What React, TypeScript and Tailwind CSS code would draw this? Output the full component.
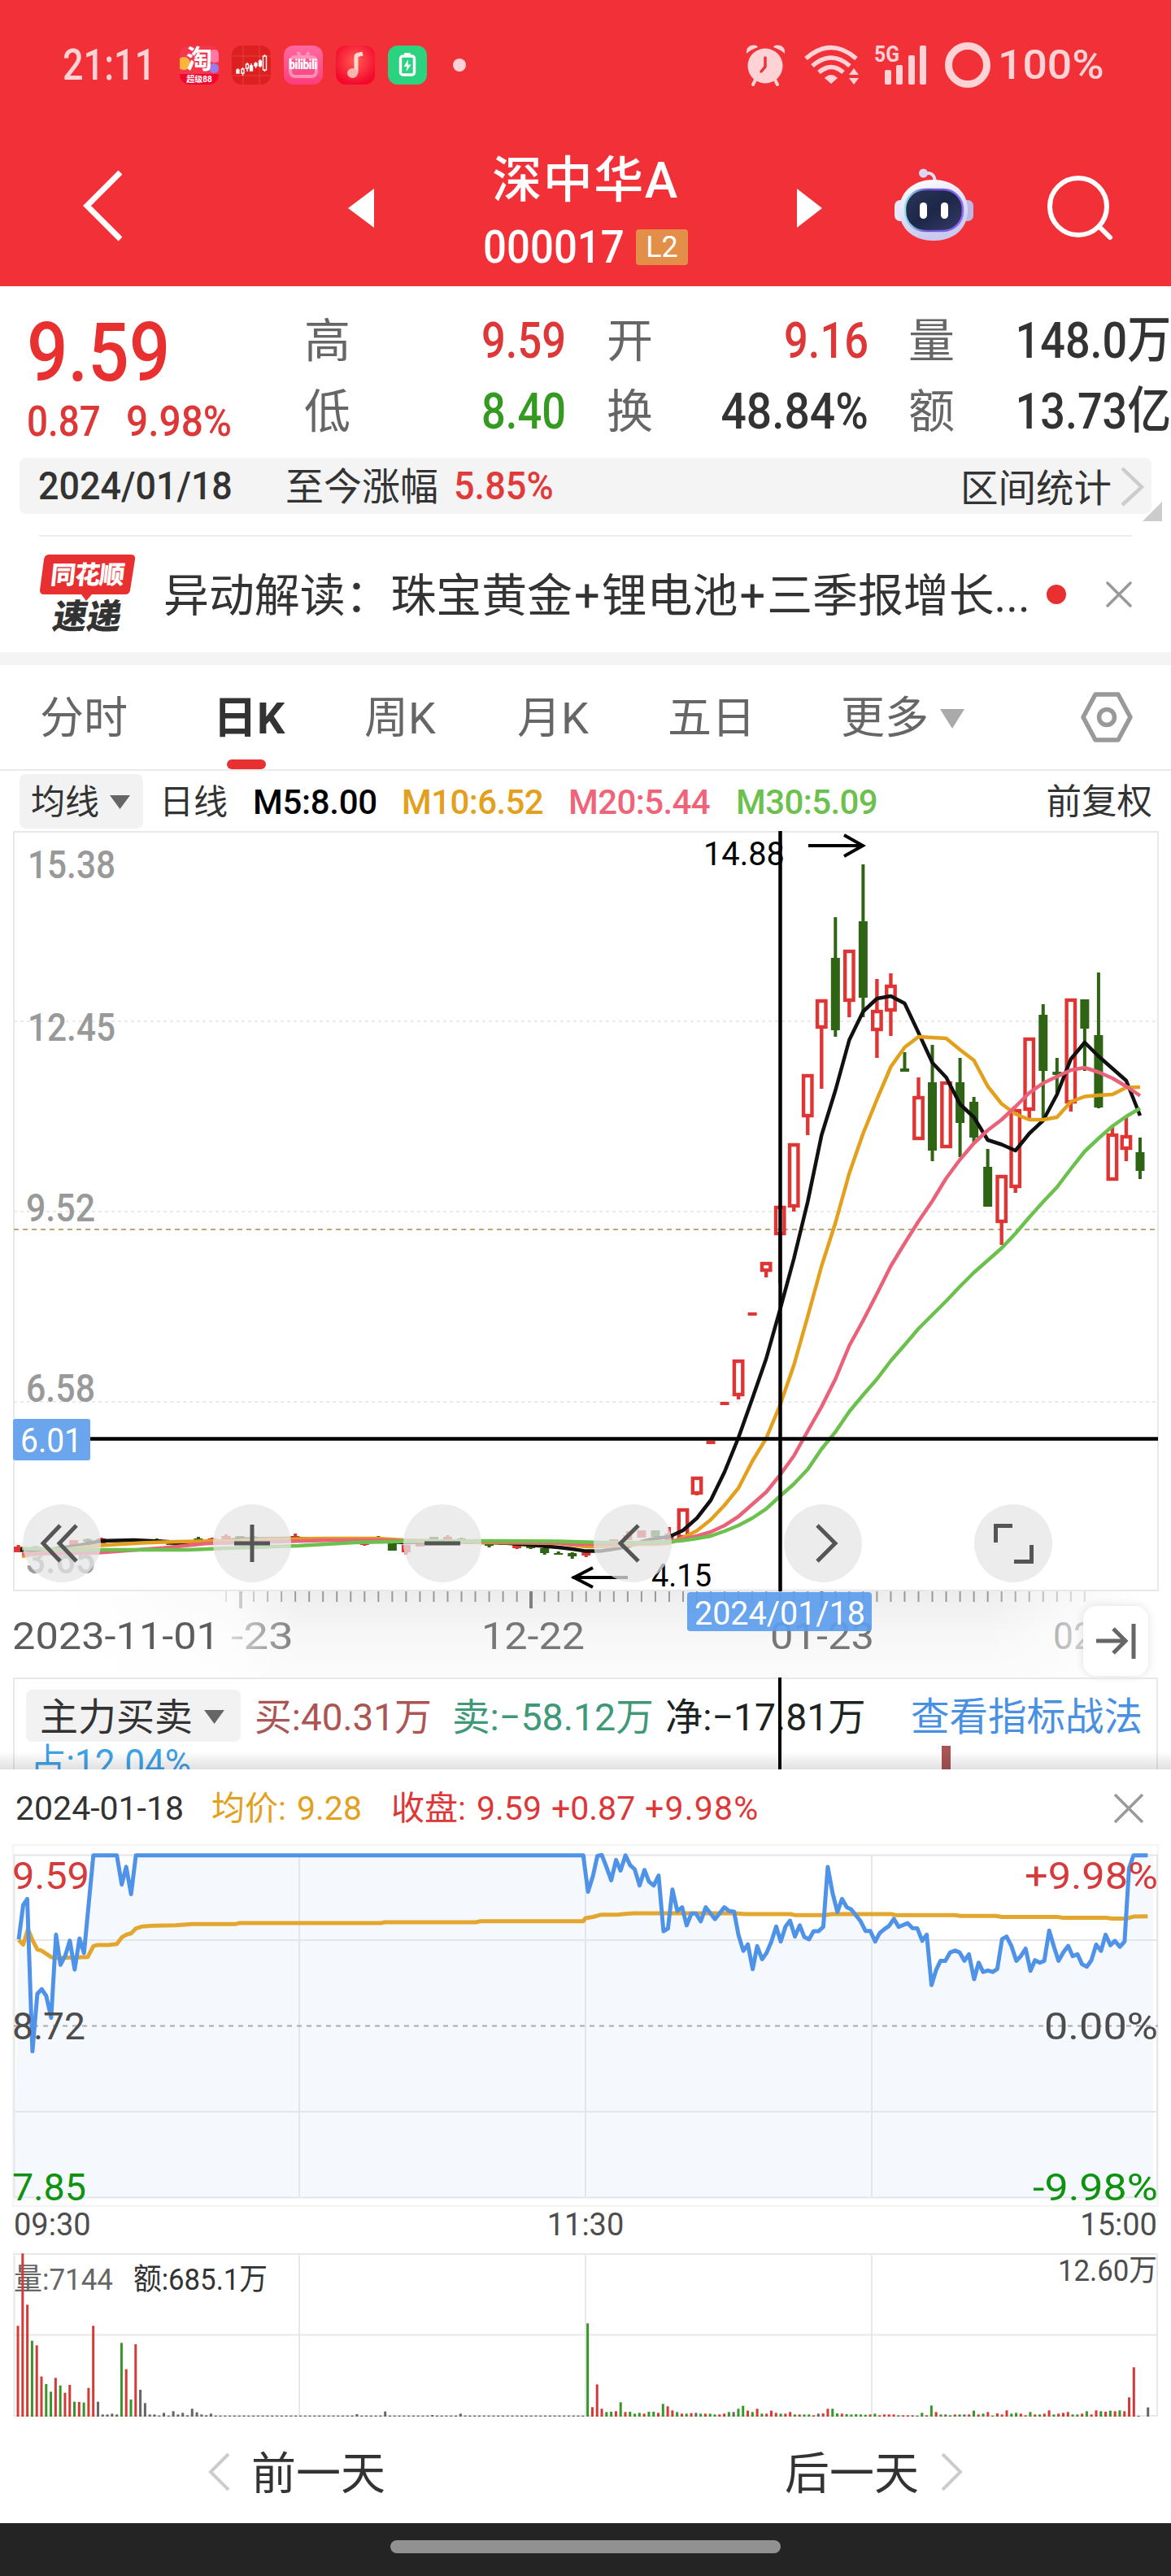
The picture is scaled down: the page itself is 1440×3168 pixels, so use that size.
import type { ReactNode } from 'react'

type Pt = [number, number]
// [slot, high, bodyTop, bodyBottom, low, colour]
type Candle = [number, number, number, number, number, 'r' | 'g']

const RED = '#e03535'
const GREEN = '#2f6415'
const FONT = "Roboto, 'Noto Sans CJK SC', sans-serif"

const SLOT = 17.03
const slotX = (i: number) => 959.2 + i * SLOT

const CANDLES: Candle[] = [
  [-55, 1900, 1902, 1909, 1909, 'r'], [-54, 1905, 1907, 1914, 1914, 'r'], [-51, 1894, 1894, 1900, 1903, 'r'],
  [-50, 1892, 1893, 1896, 1900, 'g'], [-49, 1891, 1892, 1898, 1898, 'r'], [-46, 1893, 1893, 1896, 1896, 'r'],
  [-45, 1892, 1893, 1896, 1896, 'g'], [-44, 1896, 1897, 1900, 1900, 'g'], [-43, 1895, 1896, 1901, 1901, 'r'],
  [-42, 1890, 1892, 1895, 1897, 'g'], [-41, 1891, 1892, 1896, 1896, 'r'], [-40, 1887, 1889, 1893, 1893, 'r'],
  [-39, 1889, 1889, 1893, 1893, 'g'], [-38, 1889, 1890, 1893, 1893, 'g'], [-35, 1886, 1889, 1892, 1892, 'r'],
  [-34, 1890, 1891, 1897, 1897, 'g'], [-33, 1891, 1892, 1896, 1896, 'g'], [-31, 1890, 1891, 1895, 1895, 'g'],
  [-30, 1890, 1891, 1900, 1901, 'r'], [-29, 1889, 1891, 1896, 1896, 'g'], [-28, 1897, 1897, 1907, 1907, 'g'],
  [-27, 1900, 1900, 1909, 1912, 'r'], [-26, 1897, 1898, 1902, 1902, 'r'], [-25, 1890, 1890, 1895, 1895, 'g'],
  [-24, 1888, 1890, 1894, 1894, 'r'], [-23, 1891, 1892, 1896, 1896, 'g'], [-21, 1896, 1897, 1901, 1903, 'g'],
  [-20, 1896, 1897, 1900, 1900, 'g'], [-19, 1897, 1898, 1904, 1905, 'r'], [-18, 1899, 1900, 1904, 1905, 'g'],
  [-17, 1903, 1904, 1910, 1912, 'g'], [-16, 1908, 1910, 1912, 1912, 'g'], [-15, 1909, 1910, 1914, 1917, 'g'],
  [-14, 1906, 1908, 1913, 1915, 'r'], [-13, 1898, 1898, 1901, 1901, 'r'], [-12, 1893, 1893, 1896, 1896, 'r'],
  [-11, 1883, 1888, 1894, 1894, 'r'], [-10, 1882, 1882, 1891, 1891, 'r'], [-9, 1882, 1882, 1890, 1890, 'g'],
  [-8, 1878, 1886, 1894, 1894, 'r'], [-7, 1855, 1855, 1892, 1892, 'r'], [-6, 1816, 1816, 1838, 1839, 'r'],
  [-5, 1772, 1772, 1776, 1776, 'r'], [-4, 1724, 1724, 1728, 1728, 'r'], [-3, 1672, 1672, 1717, 1721, 'r'],
  [-2, 1614, 1614, 1618, 1618, 'r'], [-1, 1552, 1552, 1564, 1571, 'r'], [0, 1483, 1483, 1519, 1578, 'r'],
  [1, 1406, 1406, 1485, 1490, 'r'], [2, 1321, 1321, 1374, 1396, 'r'], [3, 1229, 1229, 1265, 1339, 'r'],
  [4, 1128, 1178, 1267, 1275, 'g'], [5, 1168, 1168, 1232, 1251, 'r'], [6, 1063, 1133, 1227, 1251, 'g'],
  [7, 1204, 1242, 1268, 1301, 'r'], [8, 1197, 1211, 1244, 1274, 'r'], [9, 1294, 1314, 1318, 1318, 'g'],
  [10, 1325, 1348, 1402, 1402, 'r'], [11, 1285, 1331, 1415, 1428, 'g'], [12, 1330, 1330, 1412, 1412, 'r'],
  [13, 1301, 1331, 1381, 1423, 'g'], [14, 1349, 1355, 1399, 1405, 'g'], [15, 1413, 1435, 1484, 1484, 'g'],
  [16, 1445, 1445, 1504, 1531, 'r'], [17, 1364, 1364, 1461, 1467, 'r'], [18, 1276, 1276, 1366, 1378, 'r'],
  [19, 1235, 1248, 1317, 1375, 'g'], [20, 1301, 1318, 1322, 1344, 'g'], [21, 1228, 1228, 1357, 1367, 'r'],
  [22, 1229, 1229, 1265, 1317, 'g'], [23, 1196, 1273, 1362, 1363, 'g'], [24, 1386, 1394, 1452, 1452, 'r'],
  [25, 1374, 1396, 1414, 1428, 'r'], [26, 1399, 1417, 1440, 1450, 'g'],
]

// flat stretch on the left, then one value per slot starting at slot -16
const MA5_HEAD: Pt[] = [[25, 1906], [60, 1906], [95, 1901], [124, 1895], [165, 1894], [207, 1896], [230, 1900], [294, 1893], [358, 1892], [395, 1893], [464, 1894.5], [496, 1897], [551, 1896], [620, 1897.5], [652, 1900]]
const MA5 = [1903, 1905, 1907.6, 1907.6, 1905, 1902, 1896, 1892, 1890, 1882, 1867, 1845, 1810, 1768, 1720, 1671, 1610.6, 1548, 1478, 1396, 1341, 1279, 1244, 1228, 1225, 1234, 1270, 1307, 1325, 1358, 1374, 1402, 1407.5, 1415, 1394, 1378, 1346, 1302.5, 1282, 1299, 1314, 1329, 1372]
const MA10_HEAD: Pt[] = [[27, 1914], [50, 1910], [92, 1904], [124, 1900.5], [174, 1897.5], [216, 1896], [294, 1894.5], [330, 1893], [400, 1892], [464, 1892], [496, 1894], [597, 1897], [657, 1897.5]]
const MA10 = [1898, 1900, 1902, 1902, 1901, 1900, 1899, 1899, 1898, 1891, 1882.5, 1869, 1851, 1830, 1797, 1769, 1728, 1679, 1619, 1557, 1504, 1443, 1394, 1352, 1312, 1288, 1275, 1276, 1277, 1291, 1304, 1336, 1357.5, 1370, 1377, 1377, 1374, 1355, 1348.5, 1347, 1346, 1337.5, 1337]
const MA20_HEAD: Pt[] = [[27, 1911], [115, 1910], [202, 1903.5], [257, 1898], [321, 1896.5], [400, 1894.3], [464, 1894], [496, 1895], [597, 1896]]
const MA20 = [1897.5, 1899, 1899, 1899, 1899, 1898, 1898, 1897.5, 1896, 1893, 1889, 1884, 1876, 1865, 1850, 1835, 1814, 1790.5, 1760, 1730, 1696, 1655, 1624, 1591, 1557, 1529, 1502, 1477, 1449, 1426, 1406, 1390, 1377, 1361, 1344, 1332, 1324, 1316, 1313, 1318.5, 1326, 1336, 1347.5]
const MA30_HEAD: Pt[] = [[27, 1904.5], [115, 1906], [230, 1906], [294, 1903.5], [367, 1901], [436, 1897], [505, 1895.5], [597, 1895]]
const MA30 = [1895.5, 1896, 1896.5, 1897, 1897, 1897, 1897, 1896.5, 1896, 1894.6, 1892, 1889, 1883, 1876, 1867, 1855.6, 1840, 1825, 1807, 1782, 1761, 1736, 1715.5, 1696, 1673.5, 1654, 1634, 1617, 1600, 1582, 1565, 1550, 1535, 1517, 1497, 1478, 1460, 1437.5, 1416, 1400, 1385, 1373, 1363]

const maPoints = (head: Pt[], tail: number[]) =>
  [...head, ...tail.map((y, i): Pt => [slotX(i - 16), y])].map(p => p.join(',')).join(' ')

const PRICE_AM: Pt[] = [[50, 588], [62, 478], [73, 458], [87, 948], [100, 763], [112, 748], [124, 770], [137, 840], [150, 573], [162, 670], [175, 640], [187, 592], [200, 685], [213, 585], [225, 632], [250, 318], [313, 318], [326, 412], [338, 355], [351, 443], [364, 318], [1562, 318]]
const PRICE_PM: Pt[] = [[7, 435], [20, 385], [32, 320], [44, 317], [57, 358], [69, 398], [82, 333], [94, 367], [107, 318], [120, 350], [132, 363], [145, 415], [158, 365], [170, 402], [183, 415], [196, 383], [209, 562], [221, 553], [233, 428], [246, 497], [259, 485], [271, 543], [284, 505], [296, 505], [309, 530], [322, 485], [334, 503], [347, 523], [372, 485], [385, 497], [398, 499], [410, 575], [423, 625], [435, 604], [448, 684], [460, 610], [473, 652], [485, 632], [498, 595], [511, 547], [523, 595], [536, 547], [548, 528], [561, 579], [574, 543], [586, 580], [599, 588], [611, 562], [624, 562], [637, 548], [649, 355], [662, 440], [675, 500], [687, 458], [700, 485], [712, 492], [737, 530], [750, 561], [763, 561], [776, 595], [788, 568], [801, 555], [813, 545], [826, 522], [839, 548], [863, 536], [876, 552], [889, 553], [902, 593], [914, 573], [927, 735], [939, 687], [951, 657], [964, 657], [977, 630], [990, 624], [1002, 630], [1015, 657], [1027, 636], [1041, 716], [1053, 663], [1065, 693], [1078, 688], [1091, 693], [1103, 683], [1116, 587], [1128, 579], [1141, 610], [1154, 657], [1166, 642], [1179, 618], [1192, 689], [1204, 655], [1217, 663], [1229, 657], [1242, 560], [1255, 612], [1267, 657], [1280, 630], [1293, 609], [1305, 642], [1318, 636], [1330, 668], [1343, 676], [1355, 655], [1368, 605], [1381, 625], [1393, 573], [1406, 607], [1418, 593], [1431, 612], [1444, 595], [1456, 360], [1468, 318], [1506, 318]]
const AVG_AM: Pt[] = [[50, 590], [62, 605], [75, 555], [87, 590], [100, 620], [112, 625], [137, 645], [150, 648], [235, 645], [250, 610], [262, 606], [290, 606], [313, 603], [326, 582], [338, 573], [351, 569], [364, 553], [380, 547], [410, 544], [470, 543], [515, 539], [630, 539], [640, 536], [1020, 536], [1030, 533], [1275, 533], [1285, 530], [1562, 530]]
const AVG_PM: Pt[] = [[0, 520], [20, 516], [40, 509], [85, 509], [100, 507], [130, 504], [400, 504], [430, 507], [550, 507], [560, 510], [640, 510], [660, 507], [820, 507], [830, 510], [990, 510], [1005, 513], [1100, 513], [1115, 516], [1265, 516], [1280, 519], [1395, 519], [1410, 521], [1450, 521], [1468, 515], [1506, 514]]

// both sessions share one axis, 1568 units each
const intraday = (am: Pt[], pm: Pt[]) =>
  [...am, ...pm.map(([x, y]): Pt => [x + 1568, y])]
    .map(([x, y]) => `${(x / 2.178).toFixed(1)},${(y / 2.613 - 108).toFixed(1)}`)
    .join(' ')

const PRICE = intraday(PRICE_AM, PRICE_PM)
const AVG = intraday(AVG_AM, AVG_PM)

const VOL_AM =
  'r335 r602 r413 g280 r263 r148 g120 g92 r143 g115 r88 r117 g55 r54 g52 r106 r335 k55 k8 k8 k11 k8 g272 r175 g63 r267 k99 k50 k8 k8 k4 k14 k4 k20 k8 k14 k5 k29 k16 k8 k5 k11'
const VOL_PM =
  'g344 r35 r119 r29 g17 g18 r20 g53 r17 g18 g11 g14 r11 g18 g18 r14 g47 r38 r23 g17 r11 g11 r13 k14 g11 r11 g11 g8 r8 r11 g17 k17 g29 g40 r22 g17 r29 g11 r11 r22 r14 g11 r11 r17 g8 r8 g8 g8 r5 k11 r12 r29 g29 g12 r11 g9 g8 g9 g8 g7 r8 g11 r5 r8 r8 r8 g5 r5 r5 k5 k4 g14 r5 g41 r17 g8 k8 g5 r8 g8 k8 r8 g22 r8 g11 r17 g4 r12 r8 r23 g11 g14 r11 r5 g17 r8 g8 r11 r23 g8 r11 r14 r17 g8 g8 r11 g20 r8 r23 g20 r18 g22 r20 g23 r20 r71 r182 k3 k0 k34'
const QUIET: Record<number, string> = { 72: 'k9', 78: 'k19', 88: 'k6', 94: 'k11' }
const VOLUME = [
  ...VOL_AM.split(' '),
  ...Array.from({ length: 79 }, (_, i) => QUIET[i + 42] ?? 'k4'),
  ...VOL_PM.split(' '),
]
const VOL_COLOR: Record<string, string> = { r: '#d43a36', g: '#37952a', k: '#666666' }

interface LabelProps {
  x: number
  y: number
  size: number
  w: number
  fill: string
  end?: boolean
  weight?: number
  children: string
}

function Label({ x, y, size, w, fill, end, weight = 400, children }: LabelProps) {
  return (
    <text
      x={x}
      y={y}
      fontSize={size}
      fontFamily={FONT}
      fontWeight={weight}
      fill={fill}
      textAnchor={end ? 'end' : 'start'}
      textLength={w}
      lengthAdjust="spacingAndGlyphs"
    >
      {children}
    </text>
  )
}

function StatusBar() {
  return (
    <div className="flex h-[160px] items-center">
      <span className="ml-[77px] w-[144px] origin-left scale-x-[0.85] whitespace-nowrap text-[53px] leading-[60px] font-medium text-[#ffd3d5]">21:11</span>
      <div className="flex gap-[16px]">
        <div className="relative flex h-12 w-12 flex-col items-center overflow-hidden rounded-[12px] bg-[#f4374d]">
          <span className="absolute top-[14px] -left-[3px] h-4 w-4 rounded-full bg-[#ffb43a]" />
          <span className="absolute top-[5px] -right-[3px] h-4 w-4 rounded-full bg-[#ff78a8]" />
          <span className="absolute top-[22px] right-0 h-3 w-3 rounded-full bg-[#9b7be8]" />
          <span className="relative text-[32px] leading-[35px] font-bold text-white">淘</span>
          <span className="relative w-full bg-[#f2062f] text-center text-[10px] leading-[13px] font-bold text-white">超级88</span>
        </div>
        <svg className="h-12 w-12" viewBox="0 0 48 48">
          <rect width="48" height="48" rx="12" fill="#dc2022" />
          <path d="M0 13H48M0 37H48M14 0V48M34 0V48" stroke="#e93c3c" strokeWidth="1" />
          <g stroke="#fff" strokeWidth="1.4" fill="#fff">
            <path d="M7.500 28V34M13.500 27V37M19 21V32M24 22V31M29.500 20V28M35 17V27M40.500 11V32" />
            <rect x="6" y="30" width="3" height="4" />
            <rect x="12" y="29" width="3" height="5" fill="#dc2022" />
            <rect x="17.500" y="23" width="3" height="5" fill="#dc2022" />
            <rect x="22.500" y="25" width="3" height="6" />
            <rect x="28" y="22" width="3" height="3" />
            <rect x="33.500" y="19" width="3" height="6" />
            <rect x="38.500" y="13" width="4" height="17" fill="#dc2022" />
          </g>
        </svg>
        <div className="relative flex h-12 w-12 items-center justify-center rounded-[12px] bg-linear-to-b from-[#ff68a0] to-[#fb3d7c]">
          <svg className="absolute inset-0" viewBox="0 0 48 48" fill="none" stroke="#ff90b8" strokeWidth="4">
            <rect x="8" y="14" width="32" height="24" rx="6" />
            <path d="M17 8L21 14M31 8L27 14" />
          </svg>
          <span className="relative scale-x-[0.8] text-[17px] font-black tracking-[-0.5px] text-white">bilibili</span>
        </div>
        <svg className="h-12 w-12" viewBox="0 0 48 48">
          <defs>
            <radialGradient id="music" cx="0.5" cy="0.4" r="0.6">
              <stop offset="0" stopColor="#ff5d55" />
              <stop offset="1" stopColor="#f4082c" />
            </radialGradient>
          </defs>
          <rect width="48" height="48" rx="12" fill="url(#music)" />
          <path d="M25 34V14Q25 11 29 11L33 10" fill="none" stroke="#ffd9cf" strokeWidth="5" />
          <ellipse cx="20.500" cy="34" rx="6.500" ry="6" fill="#ffb5ae" />
        </svg>
        <svg className="h-12 w-12" viewBox="0 0 48 48">
          <rect width="48" height="48" rx="12" fill="#2bd280" />
          <rect x="15.500" y="13" width="17" height="23" rx="3" fill="none" stroke="#fff" strokeWidth="3.500" />
          <rect x="20" y="9" width="8" height="3" rx="1" fill="#fff" />
          <path d="M25 17L19.500 26H23.500L22.500 32L28.500 23.500H24.500Z" fill="#fff" />
        </svg>
      </div>
      <span className="ml-[32px] h-[16px] w-[16px] rounded-full bg-[#ffd3d5]" />
      <svg className="ml-[342px] h-[56px] w-[304px] shrink-0" viewBox="915 52 304 56" fill="#ffd3d5">
        {/* alarm clock */}
        <circle cx="941" cy="81" r="21.500" />
        <path d="M918 66Q917 56 927 55.500Q931 55 932 58Q923 61 918 66ZM965 66Q966 56 956 55.500Q952 55 951 58Q960 61 965 66Z" />
        <path d="M929 98L926 104M953 98L956 104" stroke="#ffd3d5" strokeWidth="4" strokeLinecap="round" />
        <path d="M941 71V82L936 88" fill="none" stroke="#f13038" strokeWidth="3.500" strokeLinecap="round" />
        {/* wifi */}
        <g fill="none" stroke="#ffd3d5" strokeWidth="5.500">
          <path d="M991 72Q1022 45 1053 72" />
          <path d="M999 81Q1022 61 1045 81" />
          <path d="M1007 89Q1022 76 1037 89" />
        </g>
        <path d="M1014 96Q1022 88 1030 96L1022 103ZM1044 92L1050 84L1056 92ZM1044 96L1050 104L1056 96Z" />
        <Label x={1075} y={76} size={28} w={31} weight={700} fill="#ffd3d5">5G</Label>
        <rect x="1088" y="86" width="8" height="18" rx="2" />
        <rect x="1102" y="80" width="8" height="24" rx="2" />
        <rect x="1117" y="68" width="8" height="36" rx="2" />
        <rect x="1131" y="56" width="8" height="48" rx="2" />
        <circle cx="1190" cy="80" r="23.500" fill="none" stroke="#ffd3d5" strokeWidth="9" />
      </svg>
      <span className="ml-[8px] origin-left scale-x-[1.07] text-[50px] leading-[60px] font-medium text-[#ffd3d5]">100%</span>
    </div>
  )
}

function TitleBar() {
  return (
    <div className="flex h-[192px] pl-[100px]">
      <svg className="h-[192px] w-[50px] shrink-0" viewBox="0 0 50 192" fill="none" stroke="#fff" strokeWidth="7">
        <path d="M48 52L7 93L48 134" />
      </svg>
      <svg className="ml-[278px] h-[192px] w-[32px] shrink-0" viewBox="0 0 32 192" fill="#fff">
        <path d="M0 96L32 72V120Z" />
      </svg>
      <div className="flex w-[520px] shrink-0 flex-col items-center pt-[28px] text-white">
        <h1 className="h-[68px] text-[61px] leading-[68px] font-medium tracking-[1.5px]">深中华A</h1>
        <div className="mt-[26px] flex h-[44px] w-[252px] items-center justify-between">
          <span className="w-[170px] origin-left scale-x-[0.91] text-[56px] leading-[44px] font-medium">000017</span>
          <span className="flex h-[44px] w-[64px] items-center justify-center rounded-[4px] bg-[#e38e49] text-[36px] leading-[44px]">L2</span>
        </div>
      </div>
      <svg className="h-[192px] w-[31px] shrink-0" viewBox="0 0 31 192" fill="#fff">
        <path d="M31 96L0 72V120Z" />
      </svg>
      <svg className="ml-[89px] h-[192px] w-[98px] shrink-0" viewBox="0 0 98 192">
        <defs>
          <linearGradient id="shell" x1="0" y1="0" x2="0.3" y2="1">
            <stop offset="0" stopColor="#ffffff" />
            <stop offset="1" stopColor="#c8c9ef" />
          </linearGradient>
          <linearGradient id="visor" x1="0" y1="0" x2="1" y2="1">
            <stop offset="0" stopColor="#2c3557" />
            <stop offset="0.5" stopColor="#1d2748" />
            <stop offset="1" stopColor="#383c69" />
          </linearGradient>
          <linearGradient id="rim" x1="0" y1="0" x2="1" y2="0">
            <stop offset="0" stopColor="#8fe3ee" />
            <stop offset="0.4" stopColor="#6a4fc8" />
            <stop offset="1" stopColor="#8f6bff" />
          </linearGradient>
        </defs>
        <path d="M37 54Q49 50 50 64" fill="none" stroke="#e3def5" strokeWidth="4" />
        <circle cx="35.500" cy="53" r="5.500" fill="#d9d6f6" />
        <rect x="0" y="86" width="16" height="26" rx="7" fill="#e9e6f8" />
        <rect x="81" y="86" width="16" height="26" rx="7" fill="#bdb7e6" />
        <path d="M48 61C70 61 90 74 90 98C90 124 70 136 48 136C26 136 6 124 6 98C6 74 26 61 48 61Z" fill="url(#shell)" />
        <rect x="13" y="73" width="71" height="51" rx="24" fill="url(#visor)" stroke="url(#rim)" strokeWidth="2.500" />
        <rect x="31" y="89" width="9" height="20" rx="4.500" fill="#fff" />
        <rect x="57" y="89" width="9" height="20" rx="4.500" fill="#fff" />
      </svg>
      <svg className="ml-[88px] h-[192px] w-[84px] shrink-0" viewBox="0 0 84 192" fill="none" stroke="#fff" strokeWidth="6">
        <circle cx="40" cy="94" r="35" />
        <path d="M66 119L79 132" strokeLinecap="round" />
      </svg>
    </div>
  )
}

function Quote({ label, value, tone }: { label: string; value: string; tone: string }) {
  return (
    <div className="flex h-[87px] items-center justify-between">
      <span className="pt-[3px] text-[57px] leading-[87px] text-[#666666]">{label}</span>
      <span className={`origin-right whitespace-nowrap pt-[1px] text-[62px] leading-[87px] font-medium ${tone}`}>{value}</span>
    </div>
  )
}

function QuotePanel() {
  return (
    <div className="flex h-[211px] overflow-hidden">
      <div className="w-[374px] shrink-0 pt-[32px] pl-[33px]">
        <div className="h-[100px] w-[200px] origin-left scale-x-[0.88] text-[101px] leading-[100px] font-medium text-[#e83030]">9.59</div>
        <div className="mt-[10px] flex h-[50px] text-[52px] leading-[50px] font-medium text-[#dd3737]">
          <span className="w-[122px] origin-left scale-x-[0.88]">0.87</span>
          <span className="origin-left scale-x-[0.92]">9.98%</span>
        </div>
      </div>
      <div className="w-[322px] shrink-0 pt-[22px]">
        <Quote label="高" value="9.59" tone="scale-x-[0.845] text-[#dd3737]" />
        <Quote label="低" value="8.40" tone="scale-x-[0.845] text-[#349a22]" />
      </div>
      <div className="w-[372px] shrink-0 pt-[22px] pl-[50px]">
        <Quote label="开" value="9.16" tone="scale-x-[0.845] text-[#dd3737]" />
        <Quote label="换" value="48.84%" tone="scale-x-[0.89] text-[#333333]" />
      </div>
      <div className="w-[372px] shrink-0 pt-[22px] pl-[49px]">
        <Quote label="量" value="148.0万" tone="scale-x-[0.87] text-[#333333]" />
        <Quote label="额" value="13.73亿" tone="scale-x-[0.87] text-[#333333]" />
      </div>
    </div>
  )
}

function RangeBar() {
  return (
    <div className="relative mx-[24px] flex h-[69px] items-center rounded-[8px] bg-[#f4f4f4] text-[47px] leading-[69px] text-[#333333]">
      <span className="ml-[23px] w-[304px] origin-left scale-x-[0.915] text-[49px] font-medium">2024/01/18</span>
      <span className="w-[207px] pt-[2px]">至今涨幅</span>
      <span className="origin-left scale-x-[0.92] text-[49px] font-medium text-[#e03a3a]">5.85%</span>
      <span className="mr-[10px] ml-auto pt-[7px] text-[46.500px]">区间统计</span>
      <svg className="mr-[9px] h-[50px] w-[30px]" viewBox="0 0 30 50" fill="none" stroke="#cccccc" strokeWidth="4.500">
        <path d="M3 3L27 26L3 48" />
      </svg>
      <svg className="absolute -right-[13px] -bottom-[9px] h-[24px] w-[24px]" viewBox="0 0 24 24">
        <path d="M24 0V24H0Z" fill="#cccccc" />
      </svg>
    </div>
  )
}

function NewsRow() {
  return (
    <div className="mx-[48px] mt-[26px] flex h-[144px] items-center border-t-2 border-[#ededed]">
      <div className="relative w-[119px] shrink-0 self-start pt-[22px] font-black">
        <svg className="absolute top-[22px] left-0 h-[60px] w-[119px]" viewBox="0 0 119 60">
          <path d="M12 0H113Q119 0 118 6L112 44Q111 49 106 49H65L58 57L52 49H6Q1 49 1 44L6 6Q7 0 12 0Z" fill="#e83030" />
        </svg>
        <div className="relative h-[49px] -skew-x-6 text-center text-[31px] leading-[52px] tracking-[-1px] text-white">同花顺</div>
        <div className="mt-[7px] -skew-x-10 text-center text-[42px] leading-[42px] text-[#333333]">速递</div>
      </div>
      <span className="ml-[34px] w-[1074px] whitespace-nowrap pt-[3px] text-[55.900px] leading-[80px] text-[#333333]">
        异动解读：珠宝黄金<span className="px-[2px]">+</span>锂电池<span className="px-[2px]">+</span>三季报增长...
      </span>
      <span className="ml-[13px] h-[24px] w-[24px] shrink-0 rounded-full bg-[#e83030]" />
      <svg className="ml-[49px] h-[32px] w-[32px] shrink-0" viewBox="0 0 32 32" stroke="#999999" strokeWidth="3.500" strokeLinecap="round">
        <path d="M2 2L30 30M30 2L2 30" />
      </svg>
    </div>
  )
}

function Tab({ active, className, children }: { active?: boolean; className: string; children: ReactNode }) {
  return (
    <div className={`relative flex h-[128px] shrink-0 items-center pt-[3px] text-[54px] leading-[125px] ${active ? 'font-bold text-[#333333]' : 'text-[#666666]'} ${className}`}>
      {children}
      {active && <span className="absolute bottom-0 left-[17px] h-[12px] w-[48px] rounded-full bg-[#e83030]" />}
    </div>
  )
}

function Tabs() {
  return (
    <div className="flex h-[130px] border-b-2 border-[#ebebeb] pl-[49px]">
      <Tab className="w-[213px]">分时</Tab>
      <Tab className="w-[186px]" active>日K</Tab>
      <Tab className="w-[188px]">周K</Tab>
      <Tab className="w-[185px]">月K</Tab>
      <Tab className="w-[213px]">五日</Tab>
      <Tab className="w-[293px] gap-[14px]">
        更多
        <svg className="h-[24px] w-[30px]" viewBox="0 0 30 24">
          <path d="M0 0H30L15 24Z" fill="#aaaaaa" />
        </svg>
      </Tab>
      <svg className="mt-[31px] h-[66px] w-[68px]" viewBox="0 0 68 66" fill="none" stroke="#999999" strokeWidth="5.500" strokeLinejoin="round">
        <path d="M20 5H48L63 33L48 61H20L5 33Z" />
        <circle cx="34" cy="33" r="9.500" />
      </svg>
    </div>
  )
}

function IndicatorRow() {
  return (
    <div className="flex h-[74px] items-center pl-[24px] text-[42px] leading-[67px] text-[#333333]">
      <div className="flex h-[67px] w-[152px] items-center justify-between rounded-[8px] bg-[#f2f2f2] pt-[2px] pr-[16px] pl-[14px]">
        均线
        <svg className="h-[17px] w-[25px]" viewBox="0 0 25 17">
          <path d="M0 0H25L12.500 17Z" fill="#666666" />
        </svg>
      </div>
      <span className="ml-[20px] w-[115px] pt-[2px]">日线</span>
      <span className="w-[183px] pt-[2px] font-medium tracking-[-0.3px] text-black">M5:8.00</span>
      <span className="w-[205px] pt-[2px] font-medium tracking-[-0.6px] text-[#e3a01c]">M10:6.52</span>
      <span className="w-[206px] pt-[2px] font-medium tracking-[-0.6px] text-[#f0647a]">M20:5.44</span>
      <span className="w-[172px] pt-[2px] font-medium tracking-[-0.6px] text-[#6cc04d]">M30:5.09</span>
      <span className="mr-[23px] ml-auto pt-[3px] text-[43.500px]">前复权</span>
    </div>
  )
}

function CandleShape({ data }: { data: Candle }) {
  const [slot, high, top, bottom, low, tone] = data
  const x = slotX(slot)
  if (tone === 'g' || bottom - top < 10) {
    const color = tone === 'g' ? GREEN : RED
    return (
      <g fill={color}>
        <rect x={x - 2} y={high} width={4} height={low - high} />
        <rect x={x - 5.5} y={top} width={11} height={bottom - top} />
      </g>
    )
  }
  return (
    <g stroke={RED} strokeWidth={4.4} fill="none">
      {high < top && <path d={`M${x} ${high}V${top}`} />}
      {low > bottom && <path d={`M${x} ${bottom}V${low}`} />}
      <rect x={x - 5.2} y={top + 2} width={10.4} height={bottom - top - 4} />
    </g>
  )
}

function RoundButton({ children }: { children: ReactNode }) {
  return (
    <button className="flex h-[96px] w-[96px] items-center justify-center rounded-full bg-[#e6e6e6]/75">
      <svg className="h-[60px] w-[60px]" viewBox="0 0 60 60" fill="none" stroke="#555555" strokeWidth="5">
        {children}
      </svg>
    </button>
  )
}

function KChart() {
  return (
    <div className="relative h-[935px]">
      <svg className="block h-[935px] w-[1440px]" viewBox="0 1022 1440 935">
        <rect x="17" y="1023" width="1407" height="933" fill="none" stroke="#e8e8e8" strokeWidth="2" />
        <path d="M17 1256H1424M17 1490H1424M17 1724H1424" stroke="#e9e9e9" strokeWidth="2" strokeDasharray="4 4" />
        <path d="M17 1512H1424" stroke="#bba77a" strokeWidth="2" strokeDasharray="6 5" />
        <Label x={34} y={1080} size={49} w={108} weight={500} fill="#999999">15.38</Label>
        <Label x={34} y={1280} size={49} w={108} weight={500} fill="#999999">12.45</Label>
        <Label x={32} y={1502} size={49} w={85} weight={500} fill="#999999">9.52</Label>
        <Label x={32} y={1724} size={49} w={85} weight={500} fill="#999999">6.58</Label>
        <Label x={32} y={1935} size={49} w={85} weight={500} fill="#999999">3.65</Label>
        {CANDLES.map(c => <CandleShape key={c[0]} data={c} />)}
        <g fill="none" strokeWidth="4.500" strokeLinejoin="round">
          <polyline points={maPoints(MA5_HEAD, MA5)} stroke="#111111" />
          <polyline points={maPoints(MA10_HEAD, MA10)} stroke="#e3a01c" />
          <polyline points={maPoints(MA20_HEAD, MA20)} stroke="#ea6279" />
          <polyline points={maPoints(MA30_HEAD, MA30)} stroke="#6cc04d" />
        </g>
        <g fill="none" stroke="#000" strokeWidth="4.500">
          <path d="M959.500 1022V1957M111 1769.500H1424" />
          <path d="M994 1040H1062M1038 1027L1061 1040L1038 1053" strokeWidth="4" />
          <path d="M772 1940H704M729 1928L706 1940L729 1952" strokeWidth="4" />
        </g>
        <Label x={865} y={1064} size={41} w={100} fill="#000">14.88</Label>
        <Label x={801} y={1951} size={38} w={74} fill="#000">4.15</Label>
        <rect x="16" y="1745" width="95" height="51" rx="3" fill="#6aa5ee" />
        <Label x={25} y={1786} size={43} w={76} fill="#fff">6.01</Label>
      </svg>
      <div className="absolute bottom-[11px] left-[28px] flex w-[1266px] justify-between">
        <RoundButton><path d="M28 8L7 30L28 52M48 8L27 30L48 52" /></RoundButton>
        <RoundButton><path d="M30 7V53M8 30H52" /></RoundButton>
        <RoundButton><path d="M8 30H52" /></RoundButton>
        <RoundButton><path d="M37 8L15 30L37 52" /></RoundButton>
        <RoundButton><path d="M23 8L45 30L23 52" /></RoundButton>
        <RoundButton><path d="M8.500 29V8.500H29M31 52.500H52.500V32" /></RoundButton>
      </div>
    </div>
  )
}

function TimeAxis() {
  return (
    <div className="relative h-[106px]">
      <svg className="block h-[106px] w-[1440px]" viewBox="0 1957 1440 106">
        <defs>
          <linearGradient id="strip" x1="0" y1="0" x2="0" y2="1">
            <stop offset="0" stopColor="#ededed" />
            <stop offset="0.500" stopColor="#f7f7f7" />
            <stop offset="1" stopColor="#fbfbfb" />
          </linearGradient>
          <linearGradient id="fade" x1="0" y1="0" x2="1" y2="0">
            <stop offset="0.040" stopColor="#fff" />
            <stop offset="0.190" stopColor="#fff" stopOpacity="0.700" />
            <stop offset="0.250" stopColor="#fff" stopOpacity="0" />
            <stop offset="0.850" stopColor="#fff" stopOpacity="0" />
            <stop offset="0.980" stopColor="#fff" stopOpacity="1" />
          </linearGradient>
        </defs>
        <rect x="17" y="1957" width="1407" height="106" fill="url(#strip)" />
        {Array.from({ length: 63 }, (_, i) => (
          <rect key={i} x={slotX(i - 40) - 1} y={1957} width={2} height={13} fill="#999999" />
        ))}
        <path d="M296 1957V1978M653 1957V1978M1010.500 1957V1978" stroke="#808080" strokeWidth="4" />
        <Label x={284} y={2028} size={46} w={77} fill="#777777">-23</Label>
        <Label x={592} y={2028} size={46} w={127} fill="#777777">12-22</Label>
        <Label x={947} y={2028} size={46} w={128} fill="#777777">01-23</Label>
        <Label x={1295} y={2028} size={46} w={50} fill="#777777">02</Label>
        <rect x="17" y="1957" width="1407" height="106" fill="url(#fade)" />
        <Label x={15} y={2028} size={46} w={255} fill="#5c5c5c">2023-11-01</Label>
        <rect x="845" y="1958" width="227" height="48" rx="4" fill="#5e9ded" fillOpacity="0.930" />
        <Label x={854} y={1998} size={41} w={210} fill="#fff">2024/01/18</Label>
      </svg>
      <button className="absolute top-[18px] left-[1332px] flex h-[86px] w-[80px] items-center justify-center rounded-[16px] bg-white shadow-[0_0_12px_rgba(0,0,0,0.12)]">
        <svg className="h-[48px] w-[50px]" viewBox="0 0 50 48" fill="none" stroke="#666666" strokeWidth="5">
          <path d="M1 24H37M22 9L37 24L22 39M47 3V46" />
        </svg>
      </button>
    </div>
  )
}

function MainForce() {
  return (
    <div className="relative h-[113px] overflow-hidden">
      <div className="mx-[16px] h-[120px] border-2 border-[#e8e8e8] pt-[13px] pl-[14px]">
        <div className="flex h-[64px] items-center text-[47px] leading-[64px] whitespace-nowrap">
          <div className="flex h-[64px] w-[264px] shrink-0 items-center justify-between rounded-[8px] bg-[#f2f2f2] pt-[3px] pr-[20px] pl-[17px] text-[#333333]">
            主力买卖
            <svg className="h-[17px] w-[25px]" viewBox="0 0 25 17">
              <path d="M0 0H25L12.500 17Z" fill="#666666" />
            </svg>
          </div>
          <span className="ml-[17px] w-[243px] shrink-0 origin-left scale-x-[0.975] pt-[3px] text-[#ab5555]">买:40.31万</span>
          <span className="w-[262px] shrink-0 origin-left scale-x-[0.99] pt-[3px] text-[#3f9878]">卖:−58.12万</span>
          <span className="w-[302px] shrink-0 origin-left scale-x-[0.985] pt-[3px] text-[#1d241f]">净:−17.81万</span>
          <span className="pt-[3px] text-[47.500px] text-[#4a90e2]">查看指标战法</span>
        </div>
        <div className="-mt-[3px] ml-[5px] origin-left scale-x-[0.92] text-[48px] leading-[60px] text-[#3fa2e6]">占:12.04%</div>
      </div>
      <span className="absolute top-0 left-[957px] h-full w-[4px] bg-black" />
      <span className="absolute top-[84px] left-[1158px] h-[30px] w-[11px] bg-[#ab5254]" />
      <div className="absolute inset-x-0 bottom-0 h-[22px] bg-linear-to-b from-transparent to-black/12" />
    </div>
  )
}

function SheetHeader() {
  return (
    <div className="flex h-[92px] items-center pt-[3px] pr-[33px] pl-[19px] text-[41px] leading-[60px] whitespace-nowrap">
      <span className="w-[241px] text-[#333333]">2024-01-18</span>
      <span className="w-[105px] text-[#e3a01c]">均价:</span>
      <span className="w-[116px] text-[#e3a01c]">9.28</span>
      <span className="w-[105px] text-[#dd3737]">收盘:</span>
      <span className="w-[92px] text-[#dd3737]">9.59</span>
      <span className="w-[115px] text-[#dd3737]">+0.87</span>
      <span className="tracking-[1.2px] text-[#dd3737]">+9.98%</span>
      <svg className="ml-auto h-[38px] w-[38px]" viewBox="0 0 38 38" stroke="#999999" strokeWidth="3.500">
        <path d="M2 2L36 36M36 2L2 36" />
      </svg>
    </div>
  )
}

function IntradayChart() {
  return (
    <svg className="block h-[446px] w-[1440px]" viewBox="0 0 1440 446">
      <polygon points={`17,434 ${PRICE} 1418,14 1418,434`} fill="#f5f9fe" />
      <g fill="none" stroke="#e4e6e9" strokeWidth="2">
        <rect x="16" y="1" width="1408" height="444" stroke="#f4f4f4" />
        <path d="M17 13.500H1424M17 118H1424M17 329H1424M17 434.500H1424M17.500 13V434M368 13V434M720 13V434M1072 13V434M1423 13V434" />
      </g>
      <path d="M17 223.500H1424" stroke="#aaaaaa" strokeWidth="2" strokeDasharray="6 6" />
      <g fill="none" strokeWidth="5" strokeLinejoin="round">
        <polyline points={AVG} stroke="#e3a62e" />
        <polyline points={PRICE} stroke="#4f93e8" />
      </g>
      <Label x={15} y={55} size={47} w={95} fill="#d63a3a">9.59</Label>
      <Label x={15} y={240} size={47} w={90} fill="#4d4d4d">8.72</Label>
      <Label x={15} y={438} size={47} w={91} fill="#0f930f">7.85</Label>
      <Label x={1424} y={55} size={47} w={164} end fill="#d63a3a">+9.98%</Label>
      <Label x={1424} y={240} size={47} w={140} end fill="#4d4d4d">0.00%</Label>
      <Label x={1424} y={438} size={47} w={154} end fill="#0f930f">-9.98%</Label>
    </svg>
  )
}

function VolumeChart() {
  return (
    <svg className="mt-[13px] block h-[201px] w-[1440px]" viewBox="0 0 1440 201">
      <path d="M17 1H1424M17 100.500H1424M17 200H1424M17.500 0V201M368 0V201M720 0V201M1072 0V201M1423 0V201" fill="none" stroke="#e8e8e8" strokeWidth="2" />
      <Label x={17} y={45} size={37} w={122} fill="#666666">量:7144</Label>
      <Label x={164} y={45} size={37} w={165} fill="#333333">额:685.1万</Label>
      <Label x={1423} y={34} size={37} w={122} end fill="#4d4d4d">12.60万</Label>
      {VOLUME.map((bar, i) => {
        const h = Number(bar.slice(1)) / 3
        return <rect key={i} x={(24 + i * 6.305) / 1.0889 - 1.5} y={201 - h} width={3} height={h} fill={VOL_COLOR[bar[0]]} />
      })}
    </svg>
  )
}

function DayPager() {
  return (
    <div className="flex h-[131px] items-center pt-[5px] text-[55px] leading-[80px] text-[#333333]">
      <svg className="ml-[256px] h-[46px] w-[27px]" viewBox="0 0 27 46" fill="none" stroke="#cccccc" strokeWidth="4">
        <path d="M25 1L3 23L25 45" />
      </svg>
      <span className="ml-[26px] w-[656px] pt-[3px]">前一天</span>
      <span className="w-[166px] pt-[3px]">后一天</span>
      <svg className="ml-[26px] h-[46px] w-[27px]" viewBox="0 0 27 46" fill="none" stroke="#cccccc" strokeWidth="4">
        <path d="M2 1L24 23L2 45" />
      </svg>
    </div>
  )
}

export default function App() {
  return (
    <div className="h-[3168px] w-[1440px] overflow-hidden bg-white font-[Roboto,'Noto_Sans_CJK_SC',sans-serif]">
      <header className="h-[352px] bg-[#f13038]">
        <StatusBar />
        <TitleBar />
      </header>
      <QuotePanel />
      <RangeBar />
      <NewsRow />
      <div className="h-[16px] bg-[#f4f4f4]" />
      <Tabs />
      <IndicatorRow />
      <KChart />
      <TimeAxis />
      <MainForce />
      <section className="bg-white">
        <SheetHeader />
        <IntradayChart />
        <div className="flex h-[44px] items-center justify-between px-[17px] text-[38px] leading-[44px] text-[#4d4d4d]">
          <span>09:30</span>
          <span>11:30</span>
          <span>15:00</span>
        </div>
        <VolumeChart />
        <DayPager />
      </section>
      <div className="flex h-[65px] items-center justify-center bg-[#242424] pb-[7px]">
        <span className="h-[16px] w-[480px] rounded-full bg-[#919191]" />
      </div>
    </div>
  )
}
